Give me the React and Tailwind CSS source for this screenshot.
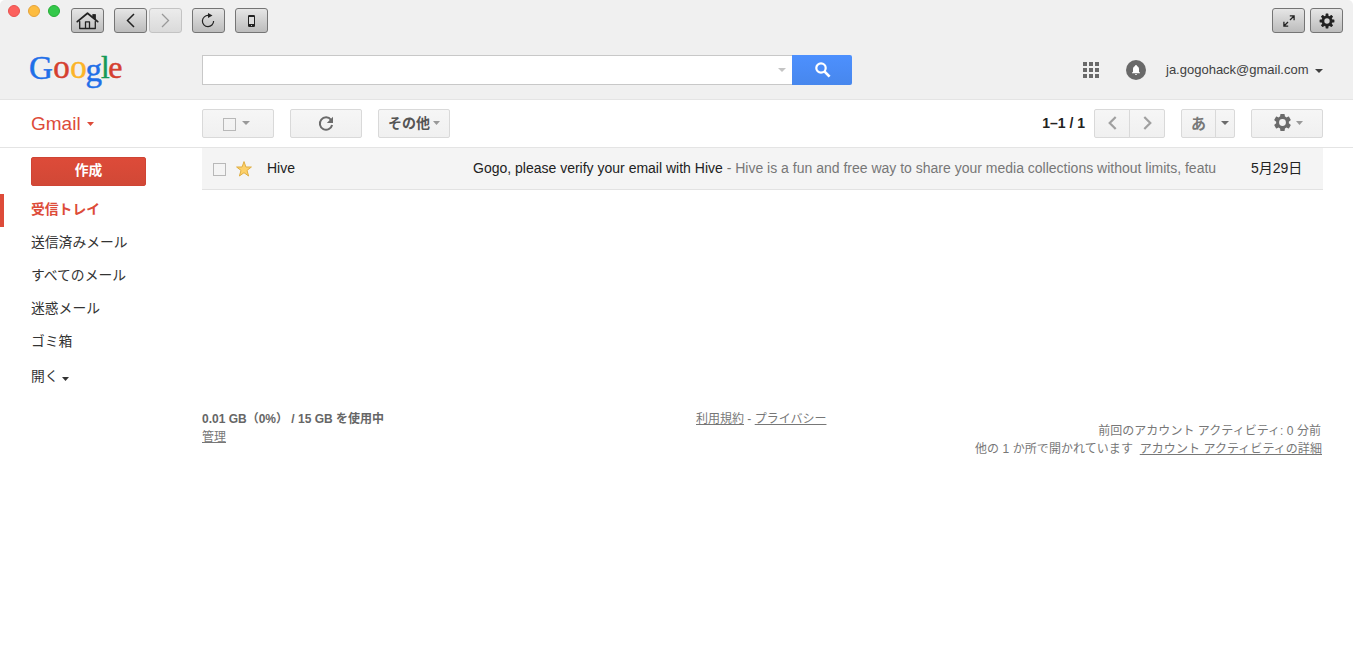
import React from "react";

const Caret = ({ className = "", w = 8, h = 4 }) => (
  <svg width={w} height={h} viewBox="0 0 8 4" preserveAspectRatio="none" className={"shrink-0 " + className} fill="currentColor">
    <path d="M0 0H8L4 4Z" />
  </svg>
);

const WinButton = ({ disabled, className = "", children }) => (
  <div className={"flex h-[25px] w-[33px] shrink-0 items-center justify-center rounded-[3px] border " + (disabled ? "border-[#c3c3c3] bg-linear-to-b from-[#ececec] to-[#dadada] text-[#999] " : "border-[#757575] bg-linear-to-b from-[#e6e6e6] to-[#bcbcbc] text-[#222] ") + className}>
    {children}
  </div>
);

const ToolButton = ({ className = "", children }) => (
  <div className={"flex h-[29px] shrink-0 items-center border border-[#d9d9d9] bg-linear-to-b from-[#f6f6f6] to-[#f0f0f0] " + className}>{children}</div>
);

const Cog = ({ size, hole = 3.2, className = "" }) => (
  <svg width={size} height={size} viewBox="-8 -8 16 16" className={"shrink-0 " + className}>
    {[0, 45, 90, 135].map((a) => (
      <rect key={a} x="-1.4" y="-7.4" width="2.8" height="14.8" rx=".4" fill="currentColor" transform={`rotate(${a})`} />
    ))}
    <circle r="5.5" fill="currentColor" />
    <circle r={hole} fill="#d4d4d4" />
  </svg>
);

const HexCog = () => (
  <svg width="17" height="17" viewBox="2 2 20 20" className="-mt-[2px] shrink-0 text-[#6b6b6b]" fill="currentColor">
    <path fillRule="evenodd" d="M19.43 12.98c.04-.32.07-.64.07-.98s-.03-.66-.07-.98l2.11-1.65c.19-.15.24-.42.12-.64l-2-3.46c-.12-.22-.39-.3-.61-.22l-2.49 1c-.52-.4-1.08-.73-1.69-.98l-.38-2.65A.49.49 0 0 0 14 2h-4c-.25 0-.46.18-.49.42l-.38 2.65c-.61.25-1.17.59-1.69.98l-2.49-1c-.23-.09-.49 0-.61.22l-2 3.46c-.13.22-.07.49.12.64l2.11 1.65c-.04.32-.07.65-.07.98s.03.66.07.98l-2.11 1.65c-.19.15-.24.42-.12.64l2 3.46c.12.22.39.3.61.22l2.49-1c.52.4 1.08.73 1.69.98l.38 2.65c.03.24.24.42.49.42h4c.25 0 .46-.18.49-.42l.38-2.65c.61-.25 1.17-.59 1.69-.98l2.49 1c.23.09.49 0 .61-.22l2-3.46c.12-.22.07-.49-.12-.64l-2.11-1.65zM12 16a4 4 0 1 1 0-8 4 4 0 0 1 0 8z" />
  </svg>
);

const logo = [
  ["G", 29, 79, "#1f6fe8", 33],
  ["o", 53.3, 78.3, "#d5402f", 33],
  ["o", 70.3, 78.3, "#fcb428", 33],
  ["g", 85.6, 80.6, "#1f6fe8", 33],
  ["l", 101, 78, "#159a58", 31],
  ["e", 108.2, 78.3, "#d5402f", 32],
];

const folders = ["送信済みメール", "すべてのメール", "迷惑メール", "ゴミ箱"];

function TitleBar() {
  return (
    <div className="flex h-10 items-start pt-2 pr-[10px] pl-2">
      <div className="-mt-[3px] flex gap-2">
        <i className="size-3 rounded-full border border-[#e8514e] bg-[#fc615d]" />
        <i className="size-3 rounded-full border border-[#e5a23a] bg-[#fdbc40]" />
        <i className="size-3 rounded-full border border-[#26ad36] bg-[#34c84a]" />
      </div>
      <WinButton className="ml-[11px]">
        <svg width="23" height="18" viewBox="0 0 23 18" fill="none" stroke="currentColor" strokeWidth="1.3" strokeLinejoin="round" strokeLinecap="round">
          <path d="M1.3 9.6L11.5 1.3L21.7 9.6" strokeWidth="1.8" />
          <path d="M3.7 9.5V16.5H19.3V9.5M9.5 16V9.8H13.5V16" />
          <path d="M17 2.5H19.5V7.3L17 5.2Z" fill="currentColor" strokeWidth=".8" />
        </svg>
      </WinButton>
      <WinButton className="ml-[10px]">
        <svg width="9" height="15" viewBox="0 0 9 15" fill="none" stroke="currentColor" strokeWidth="1.5"><path d="M8 1L1.5 7.5L8 14" /></svg>
      </WinButton>
      <WinButton disabled className="ml-0.5">
        <svg width="9" height="15" viewBox="0 0 9 15" fill="none" stroke="currentColor" strokeWidth="1.3"><path d="M1 1L7.5 7.5L1 14" /></svg>
      </WinButton>
      <WinButton className="ml-[10px]">
        <svg width="14" height="16" viewBox="0 0 14 16" fill="none" stroke="currentColor" strokeWidth="1.2" className="-mt-0.5 -ml-px">
          <path d="M7.5 3.5A5.6 5.6 0 1 0 12.6 9" />
          <path d="M7 1L11.5 3.4L7 6Z" fill="currentColor" stroke="none" />
        </svg>
      </WinButton>
      <WinButton className="ml-[10px]">
        <svg width="7" height="12" viewBox="0 0 7 12"><rect width="7" height="12" rx="1.3" fill="currentColor" /><rect x="1" y="2" width="5" height="7" fill="#dcdcdc" /><rect x="3" y="10" width="1" height="1" fill="#ccc" /></svg>
      </WinButton>
      <WinButton className="ml-auto">
        <svg width="12" height="12" viewBox="0 0 12 12" fill="none" stroke="currentColor" strokeWidth="1.3"><path d="M6.8 .9H11.1V5.2M11 1L7 5M.9 6.8V11.1H5.2M1 11L5 7" /></svg>
      </WinButton>
      <WinButton className="ml-[5px]"><Cog size={16} hole={2.7} /></WinButton>
    </div>
  );
}

function SearchBar() {
  return (
    <div className="flex h-[59px] items-start pt-[15px]">
      <svg width="130" height="54" viewBox="0 42 130 54" className="-mt-[13px] shrink-0 overflow-visible" style={{ fontFamily: '"Liberation Serif", serif' }}>
        {logo.map(([c, x, y, color, size], i) => (
          <text key={i} x={x} y={y} fill={color} stroke={color} strokeWidth=".5" fontSize={size}>{c}</text>
        ))}
      </svg>
      <div className="ml-[72px] flex h-[30px] w-[590px] items-center justify-end border border-r-0 border-[#c8c8c8] bg-white pr-1.5 text-[#c4c4c4]"><Caret /></div>
      <div className="flex h-[30px] w-[60px] items-center justify-center rounded-r-[2px] bg-linear-to-b from-[#4d90fe] to-[#4787ed]">
        <svg width="16" height="16" viewBox="0 0 16 16" fill="none" stroke="white" className="ml-px"><circle cx="6" cy="6" r="4.7" strokeWidth="2.2" /><path d="M9.4 9.4L14.6 14.6" strokeWidth="2.7" /></svg>
      </div>
      <div className="mr-[30px] ml-auto flex h-[30px] items-center">
        <div className="grid grid-cols-3 gap-0.5">
          {Array.from({ length: 9 }, (_, i) => <i key={i} className="size-1 bg-[#696969]" />)}
        </div>
        <div className="ml-[27px] flex size-5 items-center justify-center rounded-full bg-[#696969]">
          <svg width="8" height="10" viewBox="0 0 8 10" fill="white"><path d="M4 0C4.7 0 4.9.5 4.9 1C6.3 1.4 7 2.7 7 4.2V6.8L8 7.8V8.3H0V7.8L1 6.8V4.2C1 2.7 1.7 1.4 3.1 1C3.1.5 3.3 0 4 0ZM3 8.9H5Q4.9 10 4 10T3 8.9Z" /></svg>
        </div>
        <span className="ml-5 w-[143px] text-[13px] whitespace-nowrap text-[#404040]">ja.gogohack@gmail.com</span>
        <Caret className="mt-0.5 ml-1.5 text-[#404040]" />
      </div>
    </div>
  );
}

function Toolbar() {
  return (
    <div className="flex h-12 items-start border-b border-[#e4e4e4] pt-[9px] pr-[30px]">
      <div className="flex h-[29px] w-[202px] items-center pl-[31px] text-[#dd4b39]">
        <span className="w-[50px] pt-0.5 text-[19px]">Gmail</span><Caret w={7} className="ml-[6px]" />
      </div>
      <ToolButton className="w-[72px] rounded-[2px] pl-5">
        <i className="mt-0.5 size-[13px] border border-[#b8b8b8]" /><Caret className="-mt-0.5 ml-1.5 text-[#999]" />
      </ToolButton>
      <ToolButton className="ml-4 w-[72px] justify-center rounded-[2px] text-[#6b6b6b]">
        <svg width="16" height="16" viewBox="0 0 16 16" fill="none" stroke="currentColor" strokeWidth="2" className="mt-px"><path d="M13 3.8A6.2 6.2 0 1 0 14.1 9" /><path d="M15 .8V7H8.8Z" fill="currentColor" stroke="none" /></svg>
      </ToolButton>
      <ToolButton className="ml-4 w-[72px] rounded-[2px] pl-[9px]">
        <span className="text-[14px] font-bold whitespace-nowrap text-[#555]">その他</span><Caret w={7} className="-mt-0.5 ml-[3px] text-[#999]" />
      </ToolButton>
      <div className="ml-auto flex items-start">
        <span className="mr-[9px] text-[14px] leading-[29px] font-bold whitespace-nowrap text-[#222]">1–1 / 1</span>
        <ToolButton className="w-9 justify-center rounded-l-[2px] text-[#a0a0a0]">
          <svg width="9" height="14" viewBox="0 0 9 14" fill="none" stroke="currentColor" strokeWidth="2.2" className="-mt-0.5"><path d="M7.7 1L1.7 7L7.7 13" /></svg>
        </ToolButton>
        <ToolButton className="-ml-px w-9 justify-center rounded-r-[2px] text-[#a0a0a0]">
          <svg width="9" height="14" viewBox="0 0 9 14" fill="none" stroke="currentColor" strokeWidth="2.2" className="-mt-0.5"><path d="M1.3 1L7.3 7L1.3 13" /></svg>
        </ToolButton>
        <ToolButton className="ml-4 w-[35px] justify-center rounded-l-[2px] pt-0.5 text-[15px] font-bold text-[#777]">あ</ToolButton>
        <ToolButton className="-ml-px w-5 justify-center rounded-r-[2px] text-[#6b6b6b]"><Caret w={8} className="-mt-0.5 -ml-px" /></ToolButton>
        <ToolButton className="ml-4 w-[72px] rounded-[2px] pl-[22px]">
          <HexCog /><Caret className="-mt-0.5 ml-[5px] text-[#999]" w={7} />
        </ToolButton>
      </div>
    </div>
  );
}

function Sidebar() {
  return (
    <nav className="w-[202px] shrink-0 pt-[9px] text-[13.8px] text-[#333]">
      <div className="ml-[31px] flex h-[29px] w-[115px] items-center justify-center rounded-[2px] border border-[#cf4434] bg-linear-to-b from-[#dd4b39] to-[#d14836] font-bold text-white">作成</div>
      <div className="mt-2 flex h-[33px] items-center border-l-4 border-[#dd4b39] pl-[27px] font-bold text-[#dd4b39]">受信トレイ</div>
      {folders.map((f) => <div key={f} className="flex h-[33px] items-center pl-[31px]">{f}</div>)}
      <div className="mt-0.5 flex h-[33px] items-center pl-[31px]">開く<Caret w={7} className="mt-0.5 ml-[3px]" /></div>
    </nav>
  );
}

function Message() {
  return (
    <div className="flex h-[42px] items-center border-b border-[#e2e2e2] bg-[#f4f4f4] text-[14px] whitespace-nowrap text-[#222]">
      <i className="mt-px ml-[11px] size-[13px] shrink-0 border border-[#b8b8b8]" />
      <svg width="16" height="16" viewBox="0 0 16 16" className="ml-[10px] shrink-0"><path d="M8 .6L9.9 6H15.4L11 9.4L12.6 15L8 11.7L3.4 15L5 9.4L.6 6H6.1Z" fill="#fdd16a" stroke="#dfae43" strokeWidth="1" /></svg>
      <span className="ml-[15px] w-[206px] shrink-0">Hive</span>
      <span className="w-[743px] shrink-0">Gogo, please verify your email with Hive<span className="text-[#777]"> - Hive is a fun and free way to share your media collections without limits, featu</span></span>
      <span className="ml-[35px] shrink-0">5月29日</span>
    </div>
  );
}

function Footer() {
  return (
    <footer className="mt-[220px] flex text-[12px] leading-[18px] whitespace-nowrap text-[#777]">
      <div className="w-[494px]">
        <b className="block text-[#666]">0.01 GB（0%） / 15 GB を使用中</b>
        <u>管理</u>
      </div>
      <div><u>利用規約</u> - <u>プライバシー</u></div>
      <div className="mt-3 mr-[1px] ml-auto text-right">
        <div className="mr-[1px] tracking-[0.04px]">前回のアカウント アクティビティ: 0 分前</div>
        <div className="tracking-[0.06px]">他の 1 か所で開かれています&nbsp; <u>アカウント アクティビティの詳細</u></div>
      </div>
    </footer>
  );
}

export default function App() {
  return (
    <div lang="ja" className="h-[649px] w-[1353px] overflow-hidden bg-white font-['Liberation_Sans','Noto_Sans_CJK_JP',sans-serif]">
      <header className="h-[100px] rounded-t-[5px] border-b border-[#e4e4e4] bg-[#f0f0f0]">
        <TitleBar />
        <SearchBar />
      </header>
      <Toolbar />
      <div className="flex">
        <Sidebar />
        <main className="mr-[30px] min-w-0 flex-1">
          <Message />
          <Footer />
        </main>
      </div>
    </div>
  );
}
